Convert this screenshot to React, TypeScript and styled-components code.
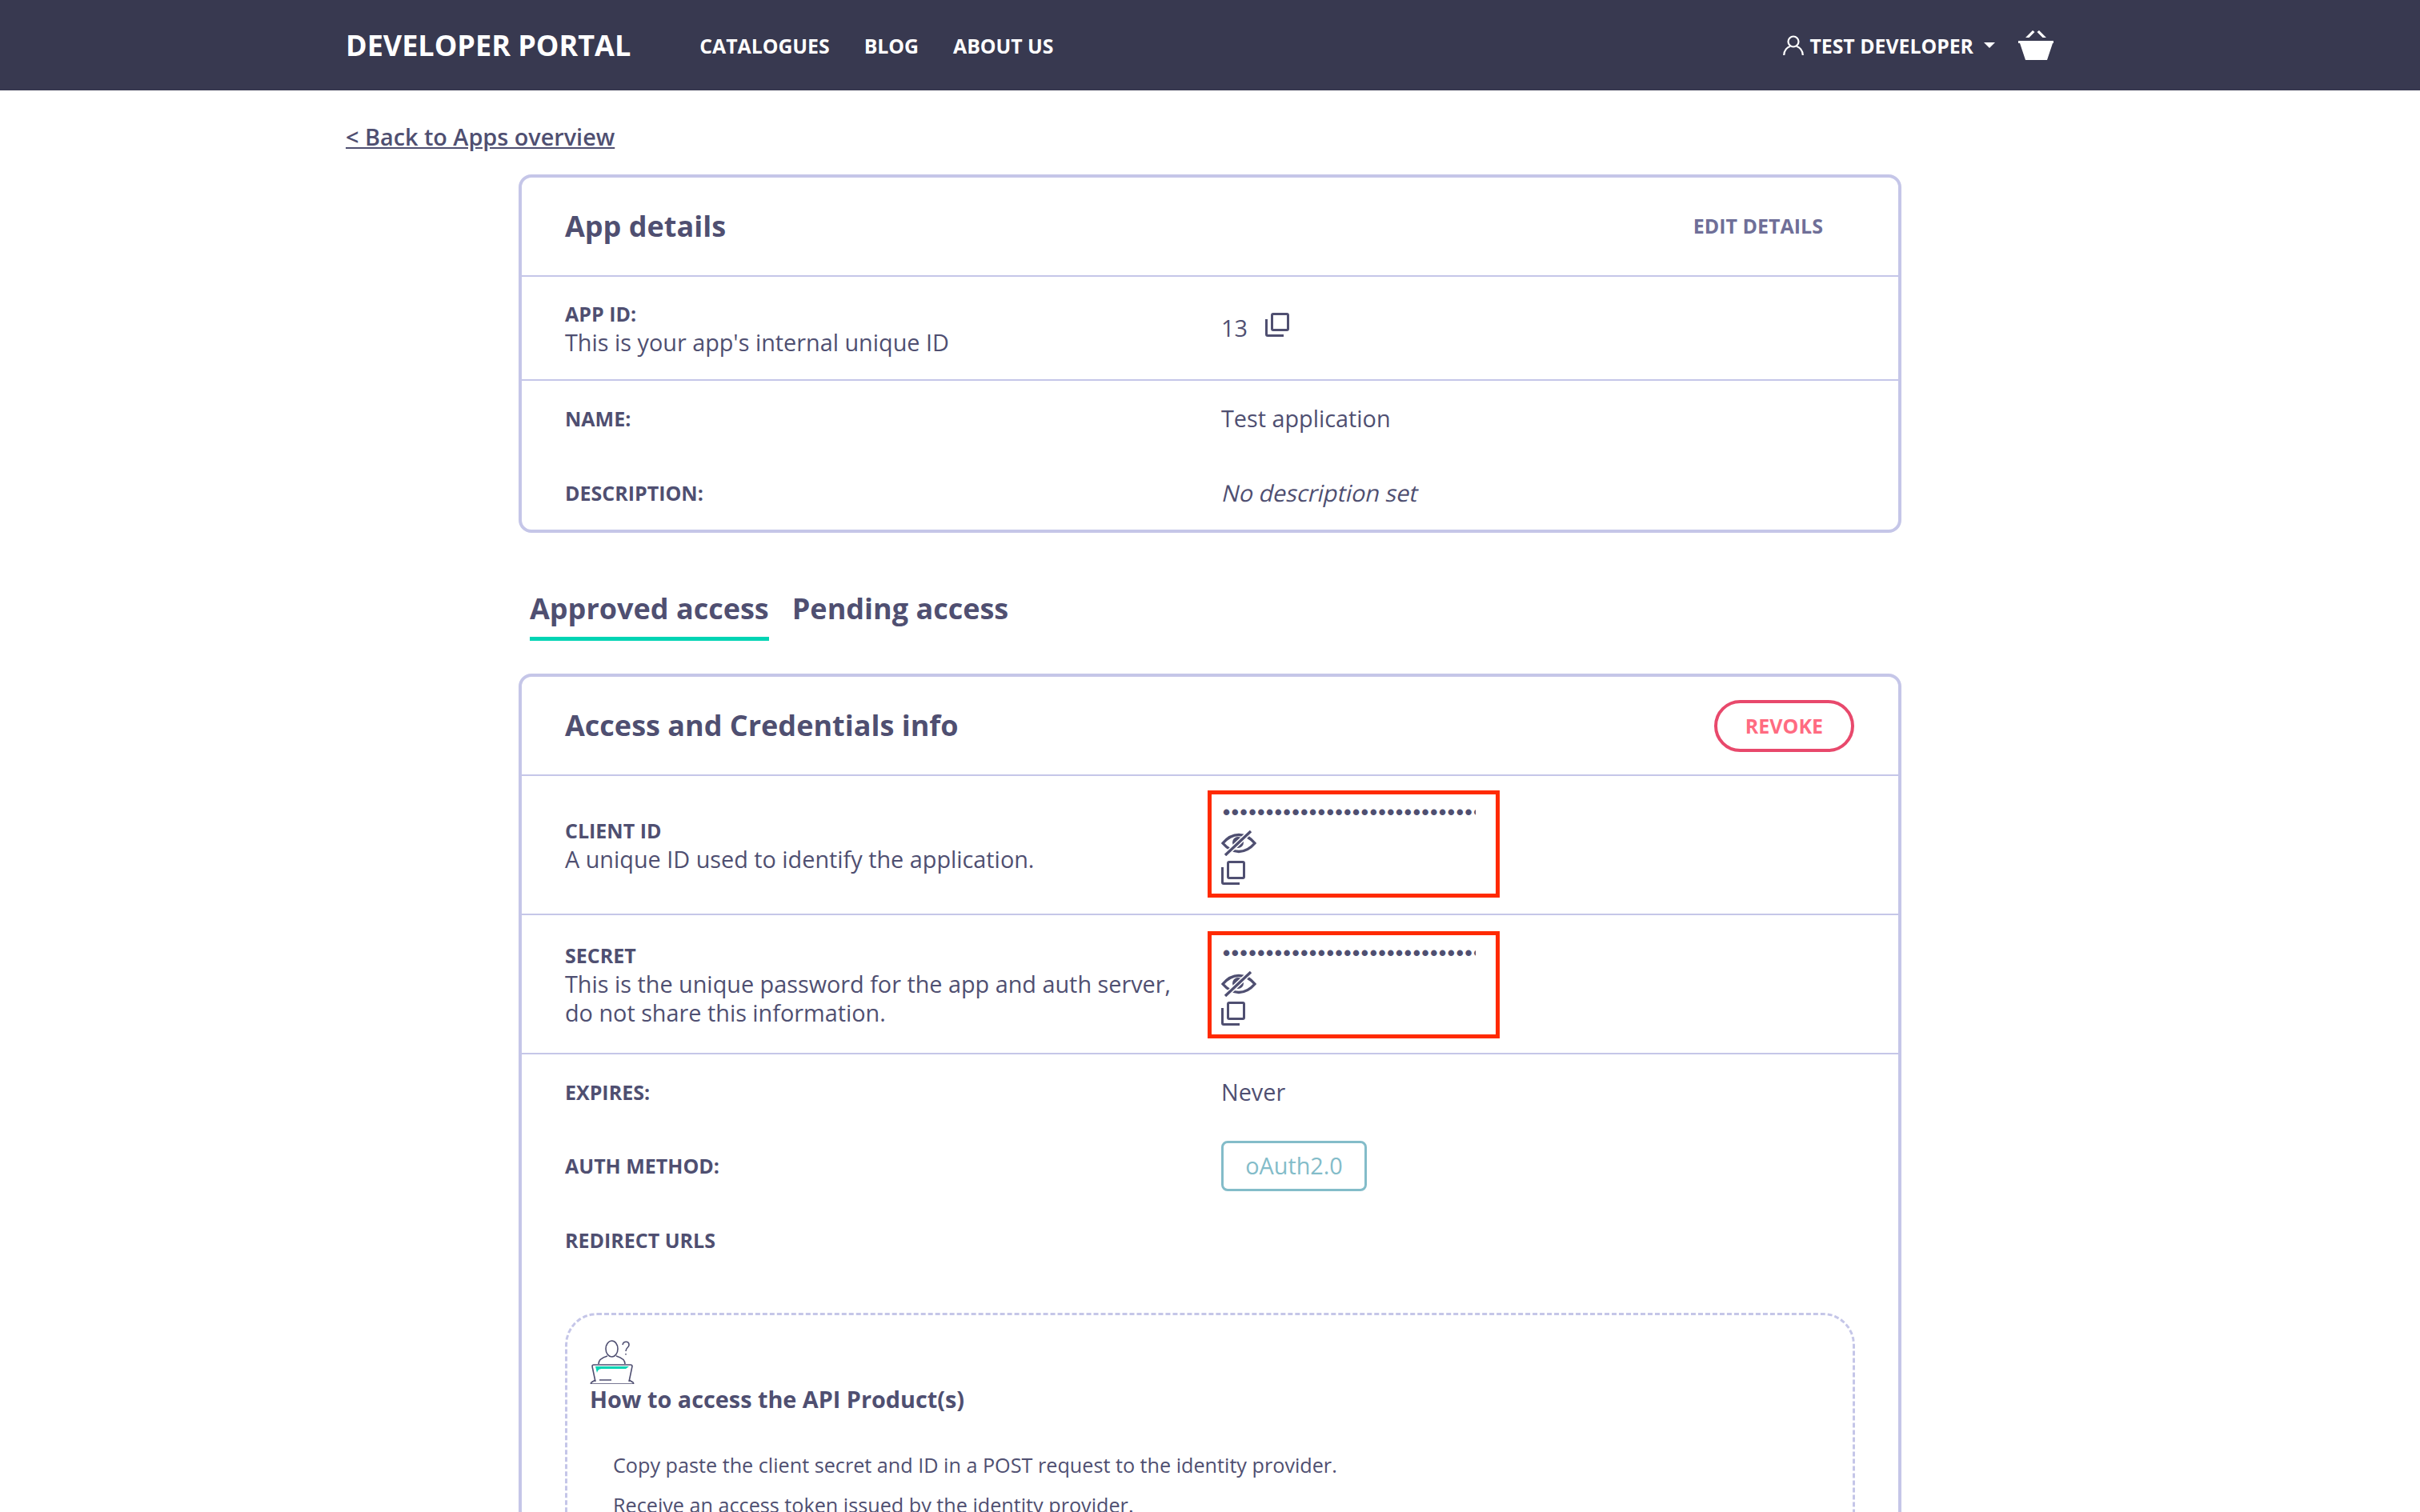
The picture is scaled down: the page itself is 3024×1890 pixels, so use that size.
import styled, { createGlobalStyle } from 'styled-components';

const GlobalStyle = createGlobalStyle`
  html, body {
    margin: 0;
    height: 1890px;
    overflow: hidden;
    background: #fff;
    font-family: 'Open Sans', 'Liberation Sans', sans-serif;
    color: #4f4f71;
  }
  * {
    box-sizing: border-box;
  }
`;

const Navbar = styled.header`
  display: flex;
  align-items: center;
  height: 113px;
  padding: 0 458px 0 432px;
  background: #383950;
  color: #fff;
`;
const Brand = styled.div`
  font-size: 36px;
  font-weight: 700;
  margin-right: 86px;
`;
const NavLink = styled.a`
  font-size: 24.8px;
  font-weight: 700;
  margin-right: 43px;
`;
const NavRight = styled.div`
  display: flex;
  align-items: center;
  margin-left: auto;
`;
const UserName = styled.span`
  font-size: 24.8px;
  font-weight: 700;
  margin-left: 7px;
`;
const Caret = styled.span`
  width: 0;
  height: 0;
  margin: 0 29px 0 13px;
  border-left: 7px solid transparent;
  border-right: 7px solid transparent;
  border-top: 7px solid #fff;
`;

const Page = styled.main`
  width: 2160px;
  margin: 0 auto;
`;
const BackLink = styled.a`
  display: block;
  height: 105px;
  padding-top: 39px;
  font-size: 28.8px;
  line-height: 38px;
  font-weight: 600;
  text-decoration: underline;
`;
const Column = styled.div`
  width: 1728px;
  margin: 0 auto;
`;
const Card = styled.section`
  border: 4px solid #c5c6e8;
  border-radius: 16px;
`;
const CardHeader = styled.div`
  display: flex;
  align-items: center;
  justify-content: space-between;
  height: 124px;
  padding: 0 54px 2px 54px;
  border-bottom: 2px solid #c5c6e8;
`;
const CardTitle = styled.h2`
  margin: 0;
  font-size: 36px;
  font-weight: 700;
`;
const EditLink = styled.a`
  margin-right: 40px;
  font-size: 25px;
  font-weight: 700;
  color: #6f6f98;
`;
const RevokeButton = styled.button`
  width: 175px;
  height: 65px;
  margin: 2px 1px 0 0;
  padding: 0;
  background: #fff;
  border: 4px solid #e8496c;
  border-radius: 33px;
  font-family: inherit;
  font-size: 25px;
  font-weight: 700;
  color: #ff6b81;
`;
const Row = styled.div<{ $height: number; $divider?: boolean }>`
  display: grid;
  grid-template-columns: 820px 1fr;
  align-items: center;
  height: ${(p) => p.$height}px;
  padding-left: 54px;
  border-bottom: ${(p) => (p.$divider ? '2px solid #c5c6e8' : 'none')};
`;
const Label = styled.div`
  font-size: 25px;
  line-height: 36px;
  font-weight: 700;
`;
const Help = styled.div`
  font-size: 28.8px;
  line-height: 36px;
`;
const Value = styled.div`
  font-size: 28.8px;
  line-height: 38px;
`;
const SlantedValue = styled(Value)`
  margin-left: 2px;
  transform: skewX(-13deg);
  transform-origin: left center;
`;
const IdValue = styled(Value)`
  display: flex;
  align-items: center;
  gap: 22px;
  svg {
    margin-top: -8px;
  }
`;
const SecretBox = styled.div<{ $shift: number }>`
  width: 365px;
  height: 134px;
  margin: ${(p) => p.$shift}px 0 0 -17px;
  padding: 9px 0 0 12px;
  border: 5px solid #ff2a00;
`;
const Dots = styled.div`
  width: 316px;
  margin-left: 2px;
  height: 26px;
  overflow: hidden;
  white-space: nowrap;
  font-family: 'Liberation Sans', sans-serif;
  font-size: 26px;
  line-height: 26px;
  letter-spacing: 1.7px;
  font-weight: 700;
`;
const IconStack = styled.div`
  display: flex;
  flex-direction: column;
  align-items: flex-start;
  gap: 6px;
  margin-top: 10px;
`;
const Tabs = styled.nav`
  display: flex;
  gap: 29px;
  padding: 70px 0 0 14px;
  margin-bottom: 41px;
`;
const Tab = styled.a<{ $active?: boolean }>`
  height: 65px;
  font-size: 36px;
  line-height: 50px;
  font-weight: 700;
  border-bottom: ${(p) => (p.$active ? '5px solid #00d4b4' : 'none')};
`;
const MethodPill = styled.span`
  display: inline-block;
  width: 182px;
  height: 63px;
  border: 3px solid #83bcc9;
  border-radius: 8px;
  font-size: 28.8px;
  line-height: 56px;
  text-align: center;
  color: #83bcc9;
`;
const HowTo = styled.div`
  margin: 44px 54px 0 54px;
  height: 400px;
  padding: 30px 28px;
  border: 3px dashed #c5c6e8;
  border-radius: 40px;
`;
const HowToTitle = styled.h3`
  margin: -5px 0 0;
  font-size: 28.8px;
  line-height: 38px;
  font-weight: 700;
`;
const Steps = styled.ol`
  margin: 38px 0 0;
  padding: 0 0 0 29px;
  list-style: none;
`;
const Step = styled.li`
  font-size: 25.2px;
  line-height: 50px;
`;

const CopyIcon = () => (
  <svg width="30" height="30" viewBox="0 0 30 30" fill="none" stroke="#4f4f71" strokeWidth="3">
    <rect x="8.5" y="1.5" width="20" height="20" rx="1.5" />
    <path d="M1.5 8v19c0 1 .5 1.5 1.5 1.5h20" />
  </svg>
);

const EyeOffIcon = () => (
  <svg width="44" height="32" viewBox="0 0 44 32" fill="none" stroke="#4f4f71" strokeWidth="3.4">
    <path d="M2 16C8 9 15 5.500 22 5.500S36 9 42 16C36 23 29 26.500 22 26.500S8 23 2 16Z" />
    <circle cx="21" cy="15" r="7" fill="#4f4f71" stroke="none" />
    <path d="M5 31 37 1" stroke="#fff" strokeWidth="6.500" />
    <path d="M5 31 37 1" strokeWidth="3.400" />
  </svg>
);

const UserIcon = () => (
  <svg width="26" height="26" viewBox="0 0 26 26" fill="none" stroke="#fff" strokeWidth="2.2">
    <circle cx="13" cy="8" r="6.5" />
    <path d="M1.2 25c0-6 4.5-10.5 7.8-11M24.8 25c0-6-4.5-10.500-7.800-11" />
  </svg>
);

const BasketIcon = () => (
  <svg width="44" height="38" viewBox="0 0 44 38" fill="#fff" stroke="none">
    <path d="M0 13h44v3l-1 0-7 21H9L2 16H0Z" />
    <path d="M9 9 18 0l2.500 2-7 7ZM35 9l-9-9-2.500 2 7 7Z" />
  </svg>
);

const HelpIcon = () => (
  <svg width="56" height="56" viewBox="12 8 56 56" fill="none" stroke="#4f4f71" strokeWidth="1.600">
    <ellipse cx="39.500" cy="20" rx="7.500" ry="10" />
    <path d="M23 39c0-5 4-8 11-10M56 39c0-5-4-8-11-10" />
    <path d="M53 15c1-5 8-5 8 0 0 4-4 3-4 8M57 26v1.500" />
    <path d="M19 42h42l-4 3H28c-4 0-6 1-7 5Z" fill="#00d4b4" stroke="none" />
    <path d="M15 42c0-1 1-2 2-2h46c1 0 2 1 2 2l-4 19M19 61l-4-19" />
    <path d="M19 59l-5 3c-1 1-1 2 1 2h50c2 0 2-1 1-2l-5-3M24 59h15" />
  </svg>
);

const BULLETS = '•'.repeat(30);

const SecretValue = ({ shift }: { shift: number }) => (
  <SecretBox $shift={shift}>
    <Dots>{BULLETS}</Dots>
    <IconStack>
      <EyeOffIcon />
      <CopyIcon />
    </IconStack>
  </SecretBox>
);

export default function App() {
  return (
    <>
      <GlobalStyle />
      <Navbar>
        <Brand>DEVELOPER PORTAL</Brand>
        <NavLink>CATALOGUES</NavLink>
        <NavLink>BLOG</NavLink>
        <NavLink>ABOUT US</NavLink>
        <NavRight>
          <UserIcon />
          <UserName>TEST DEVELOPER</UserName>
          <Caret />
          <BasketIcon />
        </NavRight>
      </Navbar>
      <Page>
        <BackLink>&lt; Back to Apps overview</BackLink>
        <Column>
          <Card>
            <CardHeader>
              <CardTitle>App details</CardTitle>
              <EditLink>EDIT DETAILS</EditLink>
            </CardHeader>
            <Row $height={130} $divider>
              <div>
                <Label>APP ID:</Label>
                <Help>This is your app's internal unique ID</Help>
              </div>
              <IdValue>
                13 <CopyIcon />
              </IdValue>
            </Row>
            <Row $height={94}>
              <Label>NAME:</Label>
              <Value>Test application</Value>
            </Row>
            <Row $height={92}>
              <Label>DESCRIPTION:</Label>
              <SlantedValue>No description set</SlantedValue>
            </Row>
          </Card>

          <Tabs>
            <Tab $active>Approved access</Tab>
            <Tab>Pending access</Tab>
          </Tabs>

          <Card>
            <CardHeader>
              <CardTitle>Access and Credentials info</CardTitle>
              <RevokeButton>REVOKE</RevokeButton>
            </CardHeader>
            <Row $height={174} $divider>
              <div>
                <Label>CLIENT ID</Label>
                <Help>A unique ID used to identify the application.</Help>
              </div>
              <SecretValue shift={-2} />
            </Row>
            <Row $height={174} $divider>
              <div>
                <Label>SECRET</Label>
                <Help>
                  This is the unique password for the app and auth server,
                  <br />
                  do not share this information.
                </Help>
              </div>
              <SecretValue shift={2} />
            </Row>
            <Row $height={93}>
              <Label>EXPIRES:</Label>
              <Value>Never</Value>
            </Row>
            <Row $height={92}>
              <Label>AUTH METHOD:</Label>
              <div>
                <MethodPill>oAuth2.0</MethodPill>
              </div>
            </Row>
            <Row $height={94}>
              <Label>REDIRECT URLS</Label>
            </Row>
            <HowTo>
              <HelpIcon />
              <HowToTitle>How to access the API Product(s)</HowToTitle>
              <Steps>
                <Step>Copy paste the client secret and ID in a POST request to the identity provider.</Step>
                <Step>Receive an access token issued by the identity provider.</Step>
              </Steps>
            </HowTo>
          </Card>
        </Column>
      </Page>
    </>
  );
}
